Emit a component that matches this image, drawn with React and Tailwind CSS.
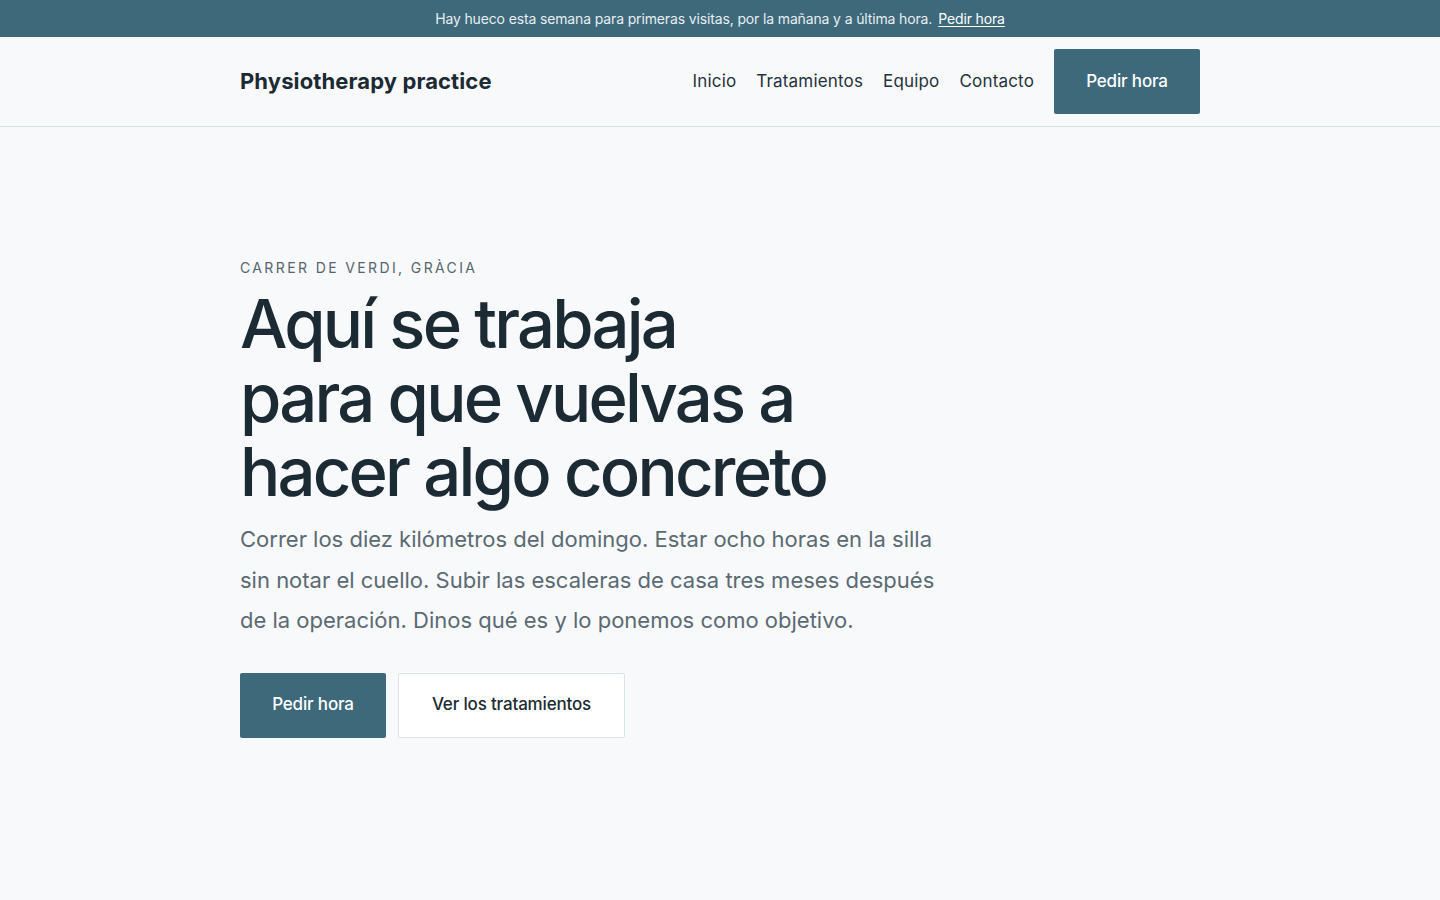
export default function App() {
  return (
    <div className="min-h-screen bg-[#f7f9fb] text-[#1c2a33]" style={{ fontFamily: 'Inter, "Noto Sans", sans-serif' }}>
      <div className="h-[37px] bg-[#3d697b] flex items-center justify-center text-[14px] text-[#e8eef1] tracking-[-0.01em]">
        <span>Hay hueco esta semana para primeras visitas, por la mañana y a última hora.</span>
        <a href="#" className="ml-[6px] underline underline-offset-2 text-white">Pedir hora</a>
      </div>
      <header className="border-b border-[#d9e3e8]">
        <div className="mx-auto w-[960px] h-[89px] flex items-center justify-between">
          <div className="text-[22px] font-bold tracking-[0.005em] text-[#1c2a33]">Physiotherapy practice</div>
          <nav className="flex items-center">
            <div className="flex items-center gap-[20px] text-[17px] text-[#24323b] tracking-[0.01em]">
              <a href="#">Inicio</a>
              <a href="#">Tratamientos</a>
              <a href="#">Equipo</a>
              <a href="#">Contacto</a>
            </div>
            <a href="#" className="ml-[20px] w-[146px] h-[65px] rounded-[2px] bg-[#3d697b] text-white text-[17px] font-medium flex items-center justify-center tracking-[-0.01em]">Pedir hora</a>
          </nav>
        </div>
      </header>
      <main className="mx-auto w-[960px] pt-[132px]">
        <div className="text-[14px] tracking-[0.17em] uppercase text-[#56656e] leading-[18px]">Carrer de Verdi, Gràcia</div>
        <h1 className="mt-[10px] text-[67px] leading-[74px] font-medium tracking-[-0.042em] text-[#1c2a33]">
          Aquí se trabaja<br />para que vuelvas a<br />hacer algo concreto
        </h1>
        <p className="mt-[10px] w-[700px] text-[22px] leading-[40.5px] text-[#5b6a73] tracking-[0em]">
          Correr los diez kilómetros del domingo. Estar ocho horas en la silla sin notar el cuello. Subir las escaleras de casa tres meses después de la operación. Dinos qué es y lo ponemos como objetivo.
        </p>
        <div className="mt-[32px] flex gap-[12px]">
          <a href="#" className="w-[146px] h-[65px] rounded-[2px] bg-[#3d697b] text-white text-[17px] font-medium flex items-center justify-center tracking-[-0.01em]">Pedir hora</a>
          <a href="#" className="w-[227px] h-[65px] rounded-[2px] border border-[#d9e3e8] bg-white text-[#1c2a33] text-[17px] font-medium flex items-center justify-center tracking-[-0.01em]">Ver los tratamientos</a>
        </div>
      </main>
    </div>
  );
}
